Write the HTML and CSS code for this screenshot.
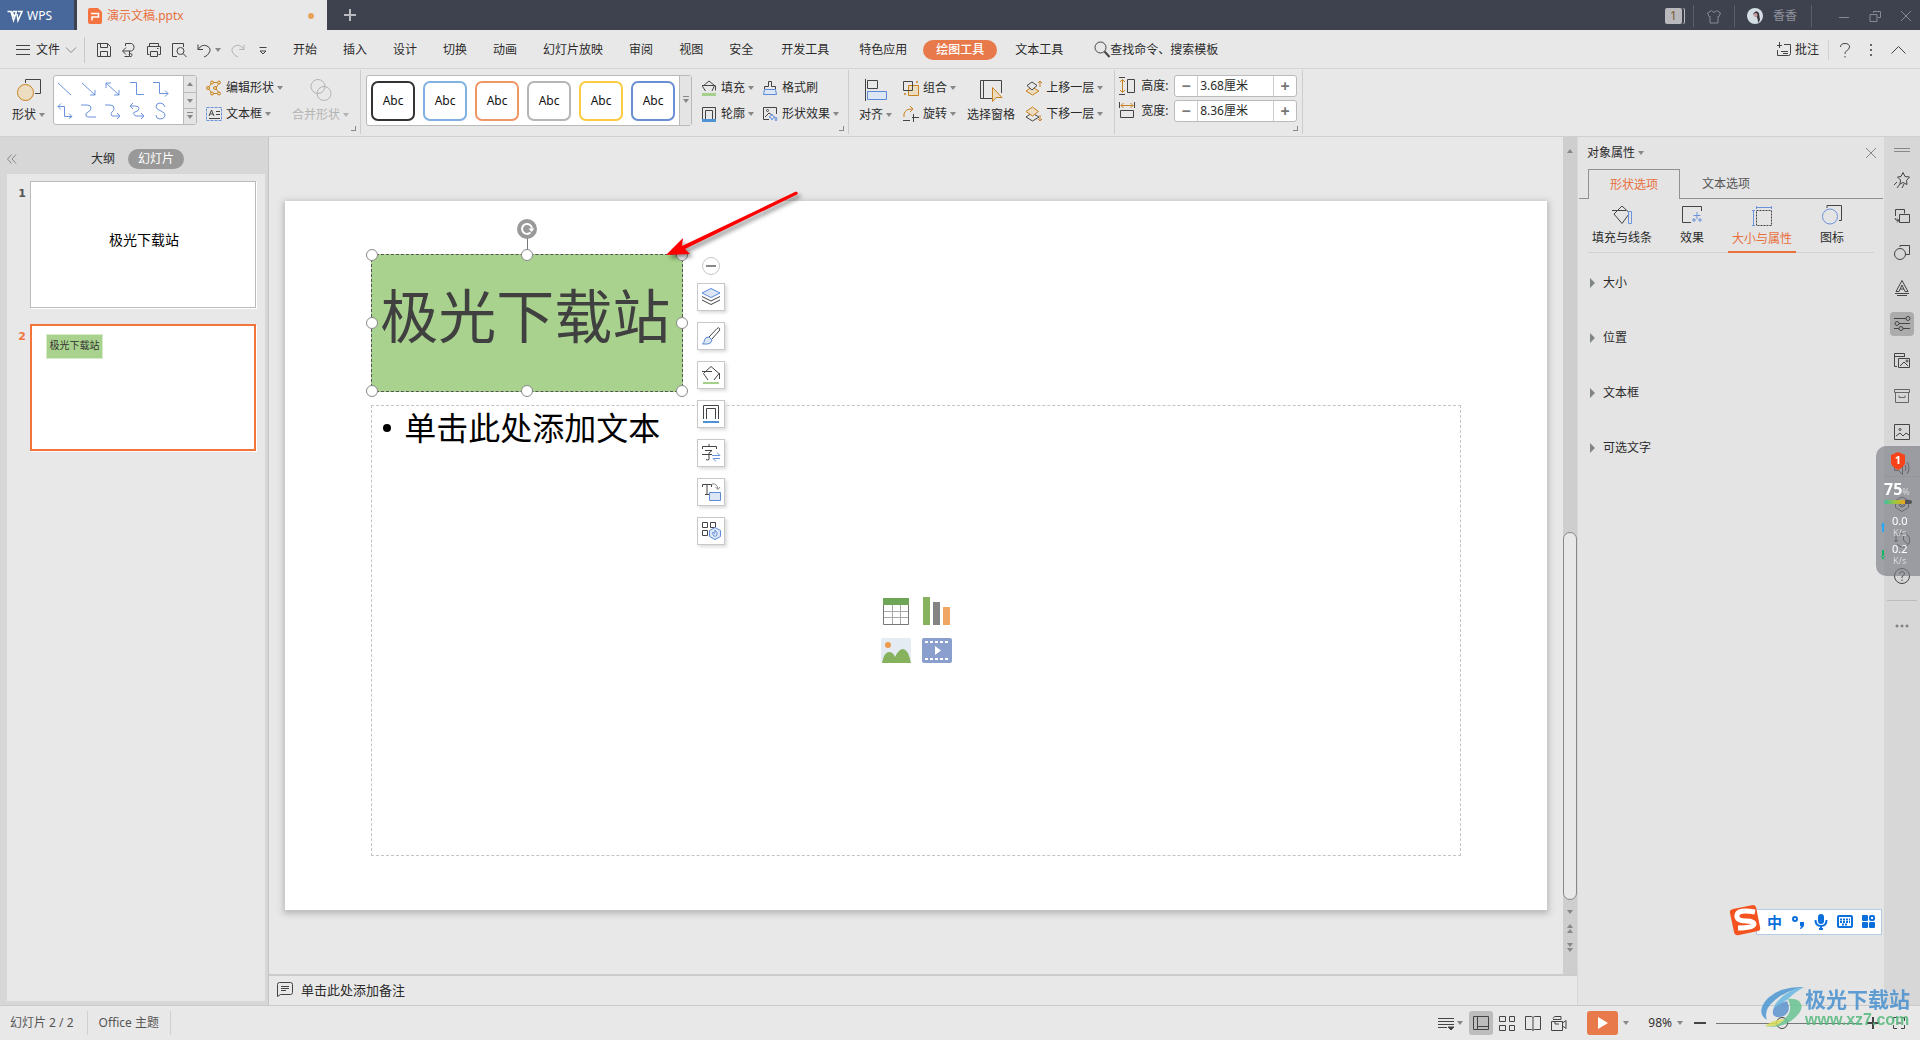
FILE: index.html
```html
<!DOCTYPE html>
<html lang="zh-CN">
<head>
<meta charset="utf-8">
<title>演示文稿.pptx</title>
<link rel="stylesheet" href="styles.css">
</head>
<body>
<header class="titlebar">
  <button class="wps"><svg width="16" height="12" viewBox="0 0 16 12"><path d="M0.500 1.500h3.500l2.500 9 3-9H6M5 1.500l3 7M10 4l1 6.500 4-9h-4" fill="none" stroke="#fff" stroke-width="1.500"/></svg>WPS</button>
  <div class="doc-tab">
    <svg width="14" height="16" viewBox="0 0 14 16"><path d="M2 0h8l4 4v10a2 2 0 0 1-2 2H2a2 2 0 0 1-2-2V2a2 2 0 0 1 2-2z" fill="#f47340"/><path d="M3 5.500h7.500V9H4v3.500" fill="none" stroke="#fff" stroke-width="1.500"/></svg>
    <span class="doc-name">演示文稿.pptx</span><span class="dot"></span>
  </div>
  <button class="new-tab" aria-label="新建"><svg width="12" height="12"><path d="M6 0v12M0 6h12" stroke="#b9bbc1" stroke-width="2"/></svg></button>
  <div class="window-tools">
    <span class="badge">1</span>
    <span class="vline"></span>
    <svg width="16" height="15" viewBox="0 0 16 15" class="t"><path d="M5.500 1.500L1.500 4l1.500 3.500h1V14h8V7.500h1L14.500 4l-4-2.500Q8 5 5.500 1.500z"/></svg>
    <span class="vline"></span>
    <svg width="16" height="16" viewBox="0 0 16 16"><circle cx="8" cy="8" r="8" fill="#d5dee4"/><path d="M6 6q3-5 6-1l1 7-2 3q0-5-2-7z" fill="#3b3740"/><circle cx="8.500" cy="7" r="2" fill="#c99f9c"/></svg>
    <span class="user">香香</span>
    <span class="vline last"></span>
    <button aria-label="最小化"><svg class="t" width="12" height="12"><path d="M1 7.500h10"/></svg></button>
    <button aria-label="还原"><svg class="t" width="12" height="12"><path d="M4.500 3V1.500h7v6H9M1 4.500h7v7H1z"/></svg></button>
    <button aria-label="关闭"><svg class="t" width="12" height="12"><path d="M1 1l10 10M11 1L1 11"/></svg></button>
  </div>
</header>

<nav class="menubar">
  <button class="file"><svg class="i" width="14" height="12"><path d="M0 1.500h14M0 5.500h14M0 10.500h14"/></svg>文件<svg class="i soft" width="10" height="6"><path d="M0 .5l5 5 5-5"/></svg></button>
  <div class="quick">
    <button aria-label="保存"><svg class="i" width="16" height="16"><path d="M1.500 1.500h10l3 3v10h-13zM4.500 1.500v4h7v-4M4.500 14.500v-5h7v5"/></svg></button>
    <button aria-label="输出"><svg class="i" width="16" height="16"><path d="M4.500 4V1.500h6a4 4 0 0 1 0 7.500H2M5 5.500L1.500 9 5 12.500M8.500 9v5.500h-5M8 13a1.500 1.500 0 1 1 1 1.500"/></svg></button>
    <button aria-label="打印"><svg class="i" width="16" height="16"><path d="M3.500 4.500v-3h9v3M3.500 12.500h-2v-8h13v8h-2M4.500 9.500h7v5h-7zM11 6.500h1.500"/></svg></button>
    <button aria-label="预览"><svg class="i" width="16" height="16"><path d="M6 14.500H1.500v-13h11V5"/><circle cx="9.500" cy="9" r="3.500"/><path d="M12 11.500l3.500 3.500"/></svg></button>
    <button class="split" aria-label="撤销"><svg class="i" width="16" height="16"><path d="M2 2.500v5h5M2 7.500q4-6 9-3.500t2 7q-1.500 3-5 4"/></svg><i class="caret"></i></button>
    <button aria-label="恢复"><svg class="i faint" width="16" height="16"><path d="M14 2.500v5H9M14 7.500Q10 1.500 5 4t-2 7q1.500 3 5 4"/></svg></button>
    <button aria-label="更多"><svg class="i" width="16" height="16"><path d="M4.500 5.500h7M5 9h6l-3 3z"/></svg></button>
  </div>
  <div class="tabs">
    <button>开始</button><button>插入</button><button>设计</button><button>切换</button><button>动画</button><button>幻灯片放映</button><button>审阅</button><button>视图</button><button>安全</button>
    <button class="wide">开发工具</button><button class="wide">特色应用</button><button class="active">绘图工具</button><button class="wide">文本工具</button>
  </div>
  <button class="search"><svg class="i" width="16" height="17" viewBox="0 0 16 17"><circle cx="6.500" cy="6.500" r="5.500"/><path d="M10.500 10.500l5 5.500" stroke-width="2"/></svg>查找命令、搜索模板</button>
  <div class="menu-right">
    <button class="note-btn"><svg class="i" width="16" height="16"><path d="M3.500 0v6M1 3.500h5M8 2.500h6.500v9q0 2-2 2h-11V8M5 9.500h7M7 11.500h5"/></svg>批注</button>
    <button class="help" aria-label="帮助"><svg class="i" width="12" height="16"><path d="M1.500 5Q1.500 1.500 6 1.500T10.500 5Q10.500 7 8 8.500T6 12M6 14v1.500"/></svg></button>
    <button aria-label="更多"><svg width="4" height="14"><path d="M1 1h2v2H1zM1 6h2v2H1zM1 11h2v2H1z" fill="#666"/></svg></button>
    <button aria-label="收起"><svg class="i" width="15" height="9"><path d="M.5 8.500l7-7 7 7"/></svg></button>
  </div>
</nav>

<section class="ribbon">
  <div class="group g-shape">
    <button class="big"><svg class="i" width="24" height="24"><path d="M8.500 5V1.500h15v14H18"/><circle class="of" cx="8.500" cy="14.500" r="8"/></svg><span>形状<i class="caret"></i></span></button>
    <div class="gallery">
      <div class="gallery-cells">
        <svg class="i b" width="16" height="16"><path d="M1 2l13 12"/></svg>
        <svg class="i b" width="16" height="16"><path d="M1 2l13 12M14 9v5H9"/></svg>
        <svg class="i b" width="16" height="16"><path d="M1 2l13 12M14 9v5H9M1 7V2h5"/></svg>
        <svg class="i b" width="16" height="16"><path d="M1 1.500h6.500v12H15"/></svg>
        <svg class="i b" width="16" height="16"><path d="M0 1.500h6.500v11H15M12 9.500l3 3-3 3"/></svg>
        <svg class="i b" width="16" height="16"><path d="M1 3.500h6.500v10H15M12 10.500l3 3-3 2M4 .5l-3 3 3 3"/></svg>
        <svg class="i b" width="16" height="16"><path d="M0 2h6q4 0 4 3t-3 4-2 4q1 1 3 1h7"/></svg>
        <svg class="i b" width="16" height="16"><path d="M0 2h5q4 0 4 3t-2 4 0 4h8M12 10l3 3-3 3"/></svg>
        <svg class="i b" width="16" height="16"><path d="M1 3h5q4 0 4 2.500T6 9t1 4h8M12 10l3 3-3 3M4 0L1 3l3 3"/></svg>
        <svg class="i b" width="16" height="16"><path d="M12 4Q11 0 7 0 3 0 3 4q0 2 5 4t4 5q-1 3-5 3-4 0-4-4"/></svg>
      </div>
      <div class="spin"><button aria-label="上"><i class="caret up"></i></button><button aria-label="下"><i class="caret"></i></button><button aria-label="展开"><i class="caret bar"></i></button></div>
    </div>
    <div class="rows">
      <button><svg class="i o" width="16" height="16"><path d="M11 2.500H6L2 8l4 5.500h5M13 3.500L9.500 8l3.500 5"/><circle class="of" cx="6" cy="2.500" r="1.500"/><circle class="of" cx="13" cy="2.500" r="1.500"/><circle class="of" cx="2" cy="8" r="1.500"/><circle class="of" cx="9" cy="8" r="1.500"/><circle class="of" cx="6" cy="13.500" r="1.500"/><circle class="of" cx="13" cy="13.500" r="1.500"/></svg>编辑形状<i class="caret"></i></button>
      <button><svg class="i" width="16" height="16"><path class="b" stroke-dasharray="3 1" d="M.5 1.500h15v13H.5z"/><path d="M3 10l2.500-6L8 10M4 8h3M10 5.500h4M10 8.500h4M3 12.500h11"/></svg>文本框<i class="caret"></i></button>
    </div>
    <button class="big off"><svg class="i faint" width="24" height="24"><circle cx="9" cy="8.500" r="7"/><circle cx="15" cy="15.500" r="7"/></svg><span>合并形状<i class="caret"></i></span></button>
    <i class="launcher"></i>
  </div>

  <div class="group g-style">
    <div class="style-box">
      <button class="s1">Abc</button><button class="s2">Abc</button><button class="s3">Abc</button><button class="s4">Abc</button><button class="s5">Abc</button><button class="s6">Abc</button>
      <button class="style-more" aria-label="更多样式"><i class="caret bar"></i></button>
    </div>
    <div class="rows">
      <button><svg class="i" width="16" height="16"><path d="M4.500 11L1.500 6.500 8 1l5.500 4.500-2.500 5.500M1 5.500h13M14.500 5.500v5"/><path d="M1 14.500h14" stroke="#a5d08c" stroke-width="3"/></svg>填充<i class="caret"></i></button>
      <button><svg class="i" width="16" height="16"><path d="M1.500 13V1.500h13V13M4.500 13V4.500h7V13"/><path d="M1 14.500h14" stroke="#4f93d4" stroke-width="3"/></svg>轮廓<i class="caret"></i></button>
    </div>
    <div class="rows">
      <button><svg class="i" width="16" height="16"><path d="M2.500 9V6.500h4v-5h3v5h4V9"/><path class="bf" d="M2.500 9.500h11l1 5h-13z"/></svg>格式刷</button>
      <button><svg class="i" width="16" height="16"><path d="M7 13.500H1.500v-12h13V8M3 11l4-4 3 2"/><circle cx="5.500" cy="4.500" r="1"/><path class="b" d="M10 8l1 2 2 1-2 1-1 2-1-2-2-1 2-1zM14 11l1 2-1 2-1-2z"/></svg>形状效果<i class="caret"></i></button>
    </div>
    <i class="launcher"></i>
  </div>

  <div class="group g-arrange">
    <button class="big"><svg class="i" width="24" height="24"><path d="M1.500 1v22M3.500 2.500h10v8h-10z"/><path class="bf" d="M3.500 13.500h19v8h-19z"/></svg><span>对齐<i class="caret"></i></span></button>
    <div class="rows">
      <button><svg class="i" width="16" height="16"><path d="M.5 1.500h9v9h-9z"/><path class="of" d="M5.500 5.500h10v10h-10z"/><path d="M5 10.500h4.500V5"/><path class="o" d="M13 2h2M14 1v2M1 14h2M2 13v2"/></svg>组合<i class="caret"></i></button>
      <button><svg class="i" width="16" height="16"><path class="o" d="M1 8Q2 3 9 3M7 0l3 3-3 3"/><path d="M0 14.500h7M9 11.500h7M10.500 8v8"/><path class="o" d="M1 8v3"/></svg>旋转<i class="caret"></i></button>
    </div>
    <button class="big"><svg class="i" width="24" height="24"><path d="M13 20.500H1.500v-18h21V15M4.500 2.500v18"/><path class="of" d="M13.500 9.500v14l3.500-4h6z"/></svg><span>选择窗格</span></button>
    <div class="rows">
      <button><svg class="i" width="16" height="16"><path class="of" d="M0 11l6-4 7 4-6.500 4z"/><path d="M1 5.500L6 2l5 3.500L6 10z" fill="#e8e8e8"/><path class="o" d="M14 7V1M12 3l2-2 2 2"/></svg>上移一层<i class="caret"></i></button>
      <button><svg class="i" width="16" height="16"><path d="M0 11l6-4 7 4-6.500 4z"/><path class="of" d="M0 5.500L6.500 1l6 4.500-6 4.500z"/><path class="o" d="M14 9v6M12 13l2 2 2-2"/></svg>下移一层<i class="caret"></i></button>
    </div>
    <i></i>
  </div>

  <div class="group g-size">
    <div class="field"><svg class="i" width="16" height="18"><path d="M0 .5h6M0 17.500h6M8.500 2.500h7v13h-7z"/><path class="o" d="M3.500 3v12M1 5l2.500-2.500L6 5M1 13l2.500 2.500L6 13"/></svg><label for="h">高度:</label>
      <div class="stepper"><button aria-label="减小高度">−</button><input id="h" value="3.68厘米"><button aria-label="增大高度">+</button></div></div>
    <div class="field"><svg class="i" width="16" height="18"><path d="M.5 0v6M15.500 0v6M1.500 8.500h13v7h-13z"/><path class="o" d="M2 3.500h12M4.500 1L2 3.500 4.500 6M11.500 1L14 3.500 11.500 6"/></svg><label for="w">宽度:</label>
      <div class="stepper"><button aria-label="减小宽度">−</button><input id="w" value="8.36厘米"><button aria-label="增大宽度">+</button></div></div>
    <i class="launcher"></i>
  </div>
</section>

<main class="workspace">
  <aside class="outline">
    <div class="outline-head">
      <button class="collapse" aria-label="收起"><svg class="i soft" width="10" height="10"><path d="M4.500.5L.5 5l4 4.500M9 .5L5 5l4 4.500"/></svg></button>
      <button>大纲</button><button class="pill">幻灯片</button>
    </div>
    <ol class="thumbs">
      <li><b>1</b><div class="thumb one">极光下载站</div></li>
      <li class="current"><b>2</b><div class="thumb two"><span>极光下载站</span></div></li>
    </ol>
  </aside>

  <section class="editor">
    <div class="stage">
      <div class="canvas">
        <div class="slide">
          <div class="title-box">极光下载站
            <span class="stem"></span>
            <svg class="rotate" width="20" height="20"><circle cx="10" cy="10" r="10" fill="#999"/><path d="M13.500 13.500a5 5 0 1 1 1.500-4" fill="none" stroke="#fff" stroke-width="2"/><path d="M11.500 9.500h6L14.500 13z" fill="#fff"/></svg>
            <i class="h nw"></i><i class="h n"></i><i class="h ne"></i><i class="h w"></i><i class="h e"></i><i class="h sw"></i><i class="h s"></i><i class="h se"></i>
          </div>
          <div class="body-box">
            <p>单击此处添加文本</p>
            <div class="inserts">
              <svg width="30" height="28"><path d="M2.500 1.500h25v26h-25z" fill="#fff" stroke="#777"/><path d="M11.500 8v19M19.500 8v19M3 14.500h24M3 20.500h24" stroke="#aaa"/><path d="M2 1h26v7H2z" fill="#6fa556"/></svg>
              <svg width="30" height="28"><path d="M1 0h7v28H1z" fill="#86b25e"/><path d="M11 5h7v23h-7z" fill="#848484"/><path d="M21 10h7v18h-7z" fill="#efa665"/></svg>
              <svg width="30" height="25"><rect width="30" height="25" rx="2" fill="#e4ebf2"/><circle cx="7" cy="7" r="3" fill="#f09a4e"/><path d="M1 25Q3 14 8 14q4 0 6 5 4-8 8-8 5 0 8 14z" fill="#86b25e"/></svg>
              <svg width="30" height="25"><rect width="30" height="25" rx="2" fill="#8a9fce"/><path d="M3 4h24M3 21h24" stroke="#fff" stroke-width="2" stroke-dasharray="3 2"/><path d="M13 8v9l6-4.500z" fill="#fff"/></svg>
            </div>
          </div>
          <div class="float-tools">
            <button class="round" aria-label="收起"><svg width="10" height="2"><path d="M0 1h10" stroke="#888" stroke-width="2"/></svg></button>
            <button aria-label="叠放"><svg class="i" width="20" height="20"><path d="M1 13l9 4.500 9-4.500M1 9.500l9 4.500 9-4.500"/><path class="bf" d="M1 6l9-4.500L19 6l-9 4.500z"/></svg></button>
            <button aria-label="样式"><svg class="i" width="20" height="20"><path d="M8 11l8-8.500q2-1.500 2.500 0T18 5l-7.500 8.500z"/><path class="bf" d="M8 11l3 3q-1 4-4.500 4H1.500Q3 17 3.500 14T8 11z"/></svg></button>
            <button aria-label="填充"><svg class="i" width="20" height="20"><path d="M7 15L2.500 8.500 10 1.500l8 7-5 6.500M1 6.500h10M18.500 8v6"/><path d="M2 18h16" stroke="#a5d08c" stroke-width="2"/></svg></button>
            <button aria-label="轮廓"><svg class="i" width="20" height="20"><path d="M2.500 15V1.500h15V15M5.500 15V4.500h9V15"/><path d="M2 18h16" stroke="#4f93d4" stroke-width="2"/></svg></button>
            <button aria-label="文字"><svg class="i" width="20" height="20"><path d="M8 1v2M1.500 6V3.500h14V6M4 7.500h7L8 10v6.500q-1 1-3 0M1 11.500h10"/><path class="b" d="M11 12.500h8l-3-3M19 15.500h-7l3 3"/></svg></button>
            <button aria-label="转换"><svg class="i" width="20" height="20"><path d="M1.500 5V2.500h9V5M6 2.500v10M4 12.500h4"/><path class="soft" d="M11 2q5-1 6 5M14.500 5L17 7.500 19 5"/><path class="bf" d="M8.500 10.500h11v8h-11z"/></svg></button>
            <button aria-label="图形"><svg class="i" width="20" height="20"><path d="M1.500 1.500h5v5h-5zM9.500 1.500h5v5h-5zM1.500 9.500h5v5h-5z"/><path class="bf" d="M14 6.500l5.500 3v6l-5.500 3-5.500-3v-6z"/><path class="b" d="M14 9q3 3 2 5t-3 1-1-4q1 2 2 1z"/></svg></button>
          </div>
          <svg class="arrow" width="150" height="86" viewBox="0 0 150 86"><path d="M8 75L25 58l-1 8L138 11.500q3 1 1 3L27 69l5 5z" fill="#f00"/></svg>
        </div>
      </div>
      <div class="scroll"><i class="caret up"></i><div class="track"><div class="scroll-thumb"></div></div><i class="caret"></i><span><i class="caret up"></i><i class="caret up"></i></span><span><i class="caret"></i><i class="caret"></i></span></div>
    </div>
    <div class="notes"><svg class="i" width="16" height="15"><path d="M.5 14.500v-12q0-2 2-2h11q2 0 2 2v8q0 2-2 2h-10zM4 4.500h8M4 6.500h8M4 8.500h5"/></svg>单击此处添加备注</div>
  </section>

  <aside class="props">
    <div class="props-head">对象属性<i class="caret"></i><button aria-label="关闭"><svg class="i soft" width="10" height="10"><path d="M0 0l10 10M10 0L0 10"/></svg></button></div>
    <div class="props-tabs"><button class="on">形状选项</button><button>文本选项</button></div>
    <div class="props-kinds">
      <button><svg class="i" width="22" height="20"><path d="M3 9l8-8 7 6.500M18 9l-7 9.500-8-9.500M1 5.500h14"/><path class="b" d="M17.500 6.500h3v12h-3z"/></svg>填充与线条</button>
      <button><svg class="i" width="22" height="20"><path d="M10 17.500H1.500v-16h19V6"/><path class="b" d="M16 7v7M12.500 10.500h7M13 13v4M11 15h4M19 13v4M17 15h4"/></svg>效果</button>
      <button class="on"><svg class="i" width="22" height="20"><path stroke-dasharray="2 1" d="M5.500 4.500h15v15h-15z"/><path class="b" d="M5 1.500h15M5.500 0v3M20.500 0v3M2.500 4v15M1 4.500h3M1 19.500h3"/></svg>大小与属性</button>
      <button><svg class="i" width="22" height="20"><path d="M6 3V.5h14.500v15H18"/><circle class="b" cx="9" cy="11.500" r="7.500"/></svg>图标</button>
    </div>
    <details><summary>大小</summary></details>
    <details><summary>位置</summary></details>
    <details><summary>文本框</summary></details>
    <details><summary>可选文字</summary></details>
  </aside>

  <aside class="side">
    <svg class="i soft grip" width="16" height="6"><path d="M0 1.500h16M0 4.500h16"/></svg>
    <button aria-label="动画"><svg class="i" width="16" height="16"><path d="M9 .5l2 4 4.500.5-3 3.500.5 4-4-2-3 1.500.5-4-3-3L7 4.500zM3 10l-3 3M6 12l-3 4M10 12l-2 4"/></svg></button>
    <button aria-label="切换"><svg class="i" width="16" height="16"><path d="M1.500 8V1.500h9v4M5.500 6.500h10v8h-10zM1 10q0 3 4 2.500M3 10.500l2 2-2 2"/></svg></button>
    <button aria-label="形状"><svg class="i" width="16" height="16"><path d="M6 3V1.500h9.500v9H12"/><circle cx="6" cy="10" r="5.500"/></svg></button>
    <button aria-label="艺术字"><svg class="i" width="16" height="16"><path d="M2 11.500L8 .5l6 11h-3L8 5l-3 6.500zM6 9h4M1 13.500h14M3 15.500h10"/></svg></button>
    <button class="on" aria-label="属性"><svg class="i" width="16" height="16"><path d="M0 2.500h12M5 7.500h11M0 12.500h5M9 12.500h7"/><circle cx="14" cy="2.500" r="2"/><circle cx="3" cy="7.500" r="2"/><circle cx="7" cy="12.500" r="2"/></svg></button>
    <button aria-label="模板"><svg class="i" width="16" height="16"><path d="M3 14.500H.5v-13h10V5M.5 4.500h10M4.500 6.500h11v9h-11zM6 14l4-4 4 4"/><circle cx="13" cy="9" r="1"/></svg></button>
    <button aria-label="素材"><svg class="i soft2" width="16" height="16"><path d="M.5 1.500h15v3H.5zM1.500 4.500v10h13v-10M5 7.500v2h6v-2"/></svg></button>
    <button aria-label="图片"><svg class="i" width="16" height="16"><path d="M.5.5h15v15H.5zM2 12l4-3 3 3 3-3 3 2"/><circle cx="6" cy="5.500" r="1"/></svg></button>
    <button aria-label="声音"><svg class="i" width="16" height="16"><path d="M.5 5.500h4l4-4v13l-4-4h-4zM11 5q2 3 0 6M13 2q4 6 0 12"/></svg></button>
    <button aria-label="安全"><svg class="i" width="16" height="16"><path d="M8 1l6.500 3.500v7L8 15.500l-6.500-4v-7z"/><circle cx="8" cy="8" r="3"/><path d="M6 8l2 2 3-4"/></svg></button>
    <button aria-label="历史"><svg class="i" width="16" height="16"><path d="M2 10V4M.5 8L2 10l2-2M4 3a7 7 0 1 1-1 9M9.500 4v4l4 4"/></svg></button>
    <button aria-label="帮助"><svg class="i" width="16" height="16"><circle cx="8" cy="8" r="7.500"/><path d="M5.500 6q0-2.500 2.500-2.500T10.500 6Q10.500 7 8 8.500V10M8 11.500V13"/></svg></button>
    <hr>
    <svg class="i soft2" width="14" height="4"><circle cx="2" cy="2" r="1"/><circle cx="7" cy="2" r="1"/><circle cx="12" cy="2" r="1"/></svg>
  </aside>
</main>

<footer class="status">
  <span>幻灯片 2 / 2</span><span>Office 主题</span>
  <div class="views">
    <button class="split" aria-label="备注"><svg class="i" width="16" height="16"><path d="M0 3.500h16M0 6.500h16M0 9.500h16M0 12.500h9"/><path d="M10 12h6l-3 3z" fill="#444"/></svg><i class="caret"></i></button>
    <button class="view on" aria-label="普通"><svg class="i" width="16" height="16"><path d="M.5 1.500h15v13H.5zM4.500 1.500v13M4.500 11.500h11"/></svg></button>
    <button class="view" aria-label="浏览"><svg class="i" width="16" height="16"><path d="M.5 1.500h6v5h-6zM10.500 1.500h5v5h-5zM.5 10.500h6v5h-6zM10.500 10.500h5v5h-5z"/></svg></button>
    <button class="view" aria-label="阅读"><svg class="i" width="16" height="16"><path d="M.5 1.500h6l1.500 1 1.500-1h6v13h-6l-1.500 1-1.500-1h-6zM8 3v12"/></svg></button>
    <button class="view" aria-label="演讲"><svg class="i" width="16" height="16"><path d="M2 3.500q1-3 4-2h4v3H2M.5 6.500h11v9H.5zM11.500 8L15 5.500v8L11.500 11M4 6v3h4"/></svg></button>
    <button class="play" aria-label="放映"><svg width="10" height="12"><path d="M0 0v12l10-6z" fill="#fff"/></svg></button><i class="caret"></i>
    <button class="zoom">98%<i class="caret"></i></button>
    <button aria-label="缩小"><svg width="12" height="12"><path d="M0 6h12" stroke="#444" stroke-width="2"/></svg></button>
    <input type="range" aria-label="缩放" min="0" max="100" value="45">
    <button aria-label="放大"><svg width="12" height="12"><path d="M0 6h12M6 0v12" stroke="#444" stroke-width="2"/></svg></button>
    <button class="fit" aria-label="适应"><svg class="i" width="12" height="12"><path d="M.5 4V.5H4M8 .5h3.500V4M11.500 8v3.500H8M4 11.500H.5V8M4 6h4"/></svg></button>
  </div>
</footer>

<div class="monitor">
  <div class="m-shield"><svg width="14" height="18" viewBox="0 0 14 18"><path d="M7 0l7 3v8q-1 4-7 7-6-3-7-7V3z" fill="#f8431a"/></svg><b>1</b></div>
  <div class="m-load"><b>75</b><small>%</small><div></div></div>
  <div class="m-net"><svg width="4" height="10"><path d="M1 3h2v7H1zM2 0l2 4H0z" fill="#2aa9f3"/></svg><span>0.0<small>K/s</small></span></div>
  <div class="m-net"><svg width="4" height="10"><path d="M1 0h2v7H1zM2 10l2-4H0z" fill="#13b766"/></svg><span>0.2<small>K/s</small></span></div>
</div>

<div class="ime">
  <svg class="sogou" width="32" height="32" viewBox="0 0 32 32"><path d="M4 4L24 0q2 0 3 2l4 20q1 3-2 4L10 30q-4 1-5-3L1 8Q0 5 4 4z" fill="#f4521e"/><path d="M26 7Q9 4 8 10t9 6q8 0 8 3 0 4-16 4" fill="none" stroke="#fff" stroke-width="5"/></svg>
  <span>中</span>
  <svg width="14" height="14"><circle cx="4" cy="4" r="2" fill="none" stroke="#0b6fdc" stroke-width="2"/><path d="M9 7h4v4l-3 3H9l1-3H9z" fill="#0b6fdc"/></svg>
  <svg width="14" height="16"><rect x="4" width="6" height="10" rx="3" fill="#0b6fdc"/><path d="M1.500 6q0 6 5.500 6t5.500-6M7 12v4M5 15h4" fill="none" stroke="#0b6fdc" stroke-width="2"/></svg>
  <svg width="16" height="14"><rect x="1" y="1" width="14" height="11" rx="1" fill="none" stroke="#0b6fdc" stroke-width="2"/><path d="M3 4.500h10M3 7h10M5 9.500h6" stroke="#0b6fdc" stroke-width="2" stroke-dasharray="2 1"/></svg>
  <svg width="14" height="14"><g fill="#0b6fdc"><rect width="6" height="6" rx="1"/><rect y="7" width="6" height="6" rx="1"/><rect x="7" y="7" width="6" height="6" rx="1"/></g><rect x="8" y="1" width="4" height="4" rx="1" fill="none" stroke="#0b6fdc" stroke-width="2"/></svg>
</div>

<div class="watermark">
  <svg width="44" height="42" viewBox="0 0 44 42"><path d="M43 1Q20 0 7 12-6 26 6 34 2 24 14 14 24 5 43 1z" fill="#4d97d2"/><path d="M43 1Q28 4 21 11q-12 10-8 19 3-11 14-17Q34 6 43 1z" fill="#69b8e4"/><path d="M26 15q-16 5-14 13 2 5 11 2Q31 25 26 15z" fill="#5c95cf"/><path d="M27 13q6 12-4 20-6 5-19 7 14 3 26-5 16-12 8-20-4-3-11-2z" fill="#69c493"/><path d="M4 40q9-7 20-7-8 9-20 7z" fill="#d9dd57"/></svg>
  <div><b>极光下载站</b><span>www.xz7.com</span></div>
</div>
</body>
</html>
```
FILE: styles.css
```css
* { box-sizing: border-box; }
body {
  margin: 0; min-height: 100vh; display: flex; flex-direction: column; overflow: hidden;
  font: 12px/16px "Noto Sans", "Noto Sans CJK SC", sans-serif; color: #2b2b2b; background: #e8e8e8;
}
button { font: inherit; color: inherit; background: none; border: 0; padding: 0; display: flex; align-items: center; justify-content: center; white-space: nowrap; }
svg { display: block; flex: none; overflow: visible; }
.i { fill: none; stroke: #444; stroke-width: 1; }
.i.soft, .i .soft { stroke: #888; }
.i.soft2 { stroke: #666; }
.i.faint { stroke: #b4b4b4; }
.i.b, .i .b { stroke: #6a93dc; }
.i.o, .i .o { stroke: #c8811f; }
.i .of { stroke: #c8811f; fill: #ecdcc0; }
.i .bf { stroke: #5b8bd8; fill: #dce6f4; }
.caret { flex: none; border: 3px solid transparent; border-top: 4px solid #888; border-bottom: 0; width: 6px; height: 4px; }
.caret.up { border-top: 0; border-bottom: 4px solid #888; }
.caret.bar { position: relative; }
.caret.bar::before { content: ""; position: absolute; left: -3px; top: -7px; width: 6px; height: 1px; background: #888; }

/* title bar */
.titlebar { height: 30px; display: flex; background: #3e424e; color: #b9bbc4; }
.wps { width: 74px; margin-right: 3px; gap: 4px; background: #48689b; color: #fff; justify-content: flex-start; padding: 2px 0 0 7px; }
.doc-tab { width: 250px; display: flex; align-items: center; gap: 5px; padding: 2px 13px 0 11px; background: #e8e8e8; color: #e9703d; }
.doc-name { flex: 1; }
.dot { width: 6px; height: 6px; border-radius: 50%; background: #e8a25b; }
.new-tab { width: 46px; }
.window-tools { margin-left: auto; display: flex; align-items: center; gap: 10px; padding: 2px 8px 0 0; }
.badge { width: 17px; height: 16px; border-radius: 2px; background: #b8b8bd; color: #7a5a30; text-align: center; box-shadow: 2px 0 #3e424e, 3px 0 #b8b8bd; margin-right: -1px; }
.vline { width: 1px; height: 22px; background: #5a5e69; margin: 0 2px; }
.vline.last { margin: 0 7px 0 4px; }
.user { color: #8f929d; }
.window-tools button { width: 12px; margin-left: 9px; }
.t { fill: none; stroke: #888b96; }

/* menu bar */
.menubar { height: 38px; display: flex; align-items: center; padding-top: 1px; }
.file { padding: 0 8px 0 16px; gap: 6px; height: 26px; border-right: 1px solid #c8c8c8; }
.quick { display: flex; align-items: center; gap: 9px; margin: 0 9px 0 11px; }
.split { gap: 3px; }
.tabs { display: flex; align-items: center; }
.tabs button { padding: 0 13px; height: 20px; }
.tabs .wide { padding: 0 15px; }
.tabs .active { background: #e8794a; color: #fff; font-weight: 500; border-radius: 10px; margin: 0 3px 0 1px; }
.search { margin-left: 16px; }
.menu-right { margin-left: auto; display: flex; align-items: center; gap: 18px; padding-right: 14px; }
.note-btn { gap: 3px; padding-right: 9px; height: 20px; border-right: 1px solid #d0d0d0; }
.help { margin-left: -8px; }

/* ribbon */
.ribbon { height: 69px; display: flex; border-top: 1px solid #d4d4d4; border-bottom: 1px solid #d0d0d0; }
.group { position: relative; display: flex; align-items: flex-start; padding-top: 5px; border-right: 1px solid #cdcdcd; margin: 1px 0 2px; }
.g-shape { gap: 9px; padding-left: 12px; padding-right: 11px; }
.g-style { gap: 8px; padding-left: 5px; padding-right: 9px; }
.g-arrange { gap: 11px; padding-left: 10px; }
.g-size { flex-direction: column; gap: 3px; padding-left: 4px; padding-right: 5px; }
.launcher { position: absolute; right: 4px; bottom: 3px; width: 5px; height: 5px; border: solid #888; border-width: 0 1px 1px 0; }
.big { flex-direction: column; gap: 5px; padding-top: 3px; }
.big span { display: flex; align-items: center; gap: 3px; }
.off { color: #b4b4b4; }
.off .caret { border-top-color: #b4b4b4; }
.rows { display: grid; grid-template-rows: 26px 26px; }
.rows button { justify-content: flex-start; gap: 4px; }
.rows .caret { margin-left: -1px; }
.gallery { width: 144px; height: 50px; display: flex; background: #fff; border: 1px solid #b9b9b9; border-radius: 3px; overflow: hidden; margin-left: -1px; }
.gallery-cells { flex: 1; display: grid; grid-template-columns: repeat(5, 24px); align-content: space-evenly; padding-left: 3px; }
.spin { width: 13px; display: grid; grid-template-rows: 1fr 1fr 1fr; background: #e4e4e4; border-left: 1px solid #bbb; }
.spin button + button { border-top: 1px solid #bbb; }
.style-box { height: 51px; display: flex; align-items: center; gap: 8px; padding-left: 4px; background: #fff; border: 1px solid #b9b9b9; border-radius: 3px; margin-right: 1px; }
.style-box button { width: 44px; height: 40px; border: 2px solid; border-radius: 7px; color: #111; }
.style-box .s1 { border-color: #333; }
.style-box .s2 { border-color: #7fb2e2; }
.style-box .s3 { border-color: #ef9766; }
.style-box .s4 { border-color: #b5b5b5; }
.style-box .s5 { border-color: #fccb42; }
.style-box .s6 { border-color: #6c8fd3; }
.style-box .style-more { width: 12px; height: 49px; margin-left: -4px; border: 0; border-left: 1px solid #bbb; border-radius: 0; background: #e4e4e4; }
.field { display: flex; align-items: center; }
.field svg { margin-right: 6px; }
.field label { width: 33px; }
.stepper { display: flex; width: 123px; height: 22px; background: #fff; border: 1px solid #bbb; border-radius: 3px; }
.stepper button { width: 22px; font-size: 16px; font-weight: 700; color: #777; }
.stepper input { flex: 1; min-width: 0; border: solid #ccc; border-width: 0 1px; padding: 0 2px; font: inherit; color: inherit; outline: 0; }

/* workspace */
.workspace { flex: 1; display: flex; }
.outline { width: 269px; display: flex; flex-direction: column; background: #d7d7d7; border-right: 1px solid #c4c4c4; padding: 0 3px 4px 7px; }
.outline-head { height: 37px; display: flex; align-items: center; padding-top: 7px; }
.collapse { margin-right: 74px; }
.pill { width: 56px; height: 20px; margin-left: 13px; border-radius: 10px; background: #999; color: #fff; }
.thumbs { flex: 1; margin: 0; padding: 7px 9px 0 0; list-style: none; background: #e8e8e8; }
.thumbs li { display: flex; margin-bottom: 16px; }
.thumbs b { width: 23px; padding: 5px 4px 0 0; text-align: right; font: 700 11px/16px "DejaVu Sans", sans-serif; color: #555; }
.thumb { position: relative; flex: 1; aspect-ratio: 16 / 9; background: #fff; border: 1px solid #bbb; box-shadow: 1px 1px #fff; }
.one { display: flex; align-items: center; justify-content: center; font-size: 14px; padding: 0 0 10px 2px; color: #000; }
.thumbs .current b { color: #f07540; }
.current .thumb { border: 2px solid #f2733c; }
.two span { position: absolute; left: 14px; top: 8px; width: 57px; height: 25px; text-align: center; font-size: 10px; line-height: 20px; white-space: nowrap; background: #a8d28d; border: 1px solid #d6ebc9; color: #333; }

.editor { flex: 1; min-width: 0; display: flex; flex-direction: column; }
.stage { flex: 1; display: flex; border-bottom: 2px solid #cbcbcb; }
.canvas { flex: 1; padding: 64px 16px 32px; background: #e8e8e8; }
.slide { position: relative; aspect-ratio: 1262 / 709; background: #fff; box-shadow: 0 2px 6px 2px #bbb; }
.title-box { position: absolute; left: 7%; top: 8%; width: 312px; height: 138px; margin-left: -2px; margin-top: -4px; display: flex; align-items: center; justify-content: center; background: #a8d28d; border: 1px dashed #555; font: 58px/80px "Noto Sans CJK SC", sans-serif; color: #404040; white-space: nowrap; padding: 0 4px 20px 0; }
.stem { position: absolute; left: 50%; top: -18px; height: 14px; width: 1px; background: #777; }
.rotate { position: absolute; left: 50%; top: -36px; margin-left: -10px; }
.h { position: absolute; width: 12px; height: 12px; margin: -6px; border: 1px solid #888; border-radius: 50%; background: #fff; }
.nw, .n, .ne { top: 0; } .w, .e { top: 50%; } .sw, .s, .se { top: 100%; }
.nw, .w, .sw { left: 0; } .n, .s { left: 50%; } .ne, .e, .se { left: 100%; }
.body-box { position: absolute; left: 7%; top: 29%; right: 7%; bottom: 8%; margin: -2px -2px -3px; border: 1px dashed #c4c4c4; }
.body-box p { margin: 0; padding: 0 0 0 32px; font: 32px/40px "Noto Sans CJK SC", sans-serif; color: #000; }
.body-box p::before { content: ""; position: absolute; left: 11px; top: 18px; width: 8px; height: 8px; border-radius: 50%; background: #000; }
.inserts { position: absolute; left: 50%; top: 191px; margin-left: -35px; display: grid; grid-template-columns: 30px 30px; gap: 13px 11px; }
.float-tools { position: absolute; left: 412px; top: 56px; display: flex; flex-direction: column; align-items: center; gap: 11px; }
.float-tools button { width: 28px; height: 28px; background: #fff; border: 1px solid #c8c8c8; box-shadow: 2px 2px 3px #ddd; }
.float-tools .round { width: 18px; height: 18px; margin-bottom: -3px; border-radius: 50%; box-shadow: none; }
.arrow { position: absolute; left: 373px; top: -21px; filter: drop-shadow(3px 3px 2px rgba(0, 0, 0, .45)); }
.scroll { width: 14px; display: flex; flex-direction: column; align-items: center; gap: 10px; padding: 12px 0 22px; background: #cecece; }
.scroll span { display: flex; flex-direction: column; gap: 1px; }
.track { flex: 1; width: 14px; display: flex; flex-direction: column; justify-content: flex-end; }
.scroll-thumb { height: 50%; border: 1px solid #888; border-radius: 7px; background: #e8e8e8; }
.notes { height: 29px; display: flex; align-items: center; gap: 8px; padding: 0 8px 2px; font-size: 13px; }

.props { width: 307px; padding: 0 1px; background: #e4e4e4; border-left: 1px solid #d6d6d6; }
.props-head { height: 32px; display: flex; align-items: center; gap: 3px; padding: 0 7px 0 8px; }
.props-head button { margin-left: auto; }
.props-tabs { display: flex; height: 30px; padding-left: 9px; border-bottom: 1px solid #909090; }
.props-tabs button { width: 92px; color: #555; }
.props-tabs .on { color: #e9703d; border: 1px solid #909090; border-bottom: 0; background: #e4e4e4; height: 30px; }
.props-kinds { display: flex; margin: 0 9px 19px; height: 54px; border-bottom: 1px solid #d2d2d2; }
.props-kinds button { width: 68px; margin-right: 2px; flex-direction: column; gap: 5px; }
.props-kinds .on { color: #e9703d; border-bottom: 2px solid #e9703d; height: 54px; padding-top: 2px; }
.props summary { height: 22px; margin: 0 10px 33px; display: flex; align-items: center; gap: 8px; }
.props summary::before { content: ""; border: 5px solid transparent; border-left: 5px solid #808585; border-right: 0; margin-left: 1px; }

.side { width: 36px; display: flex; flex-direction: column; align-items: center; background: #d7d7d7; padding-right: 1px; }
.grip { margin: 10px 0 15px; }
.side button { width: 24px; height: 24px; margin-bottom: 12px; border-radius: 4px; }
.side .on { background: #acacac; }
.side hr { width: 30px; margin: 0 0 23px; border: 0; border-top: 1px solid #bbb; }

/* status bar */
.status { height: 35px; display: flex; align-items: center; border-top: 1px solid #cacaca; color: #555; }
.status > span { padding: 4px 11px 4px 10px; margin-right: 1px; border-right: 1px solid #d0d0d0; word-spacing: normal; }
.status > span:first-child { padding-right: 13px; }
.views { margin-left: auto; display: flex; align-items: center; padding-right: 15px; }
.view { width: 24px; height: 24px; margin-left: 2px; border-radius: 3px; }
.views .split { margin-right: 4px; }
.view.on { background: #bdbdbd; }
.play { width: 31px; height: 24px; margin: 0 5px 0 16px; background: #e8794a; border-radius: 3px; }
.zoom { gap: 5px; margin: 0 11px 0 19px; color: #333; }
.views input { appearance: none; width: 146px; height: 14px; margin: 0 5px 0 10px; background: linear-gradient(#777, #777) center / 100% 1px no-repeat; }
.views input::-webkit-slider-thumb { appearance: none; width: 12px; height: 12px; border: 1px solid #444; border-radius: 50%; background: #e8e8e8; }
.fit { margin-left: 14px; }

/* desktop overlays */
.monitor { position: fixed; right: 0; top: 446px; width: 44px; height: 130px; padding: 6px 0 0 8px; border-radius: 10px 0 0 10px; background: rgba(122, 124, 132, .65); color: #fff; }
.monitor small { font-size: 9px; color: #d8d8d8; }
.m-shield { position: relative; width: 14px; height: 18px; margin: 0 0 6px 7px; }
.m-shield b { position: absolute; inset: 0; text-align: center; font-size: 11px; }
.m-load { height: 37px; padding-top: 4px; border-top: 1px solid #93969c; white-space: nowrap; }
.m-load b { font-size: 16px; }
.m-load div { width: 28px; height: 4px; border-radius: 2px; background: linear-gradient(90deg, #3abfa5, #a1c63c 40%, #eda31c 75%, #54545c 75%); }
.m-net { height: 28px; display: flex; align-items: center; margin-left: -3px; gap: 7px; font-size: 11px; line-height: 12px; }
.m-net span, .m-net small { display: block; }
.m-net small { margin-left: 1px; }
.ime { position: fixed; right: 38px; bottom: 105px; width: 126px; height: 26px; display: flex; align-items: center; justify-content: space-between; padding: 0 5px 0 10px; background: #fff; border: 1px solid #b4cbe8; }
.ime span { font-size: 15px; font-weight: 700; color: #0b6fdc; }
.sogou { position: absolute; left: -28px; top: -5px; }
.watermark { position: fixed; right: 10px; bottom: 10px; display: flex; opacity: .85; pointer-events: none; }
.watermark b, .watermark span { display: block; white-space: nowrap; }
.watermark b { font: 700 21px/24px "Noto Sans CJK SC", sans-serif; color: #4790cf; }
.watermark span { font: 700 16px/20px "Liberation Sans", sans-serif; color: #55b97e; }
```
